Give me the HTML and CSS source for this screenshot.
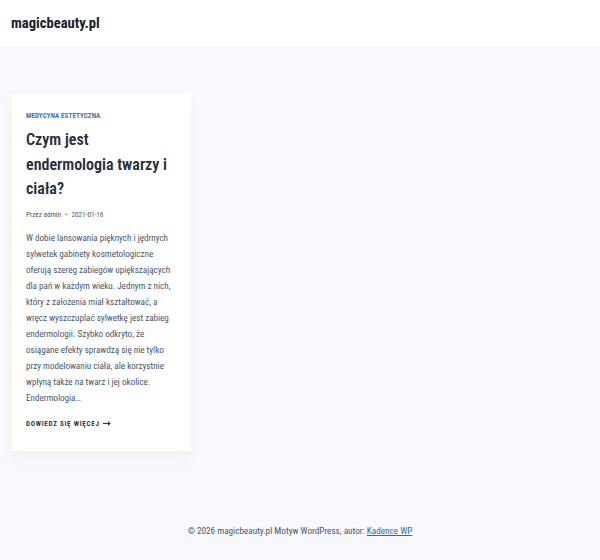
FILE: index.html
```html
<!DOCTYPE html>
<html lang="pl">
<head>
<meta charset="utf-8">
<title>magicbeauty.pl</title>
<link rel="stylesheet" href="styles.css">
</head>
<body>
<header class="site-header">
  <a class="logo" href="#">magicbeauty.pl</a>
</header>
<main class="content">
  <article class="card">
    <div class="category">MEDYCYNA ESTETYCZNA</div>
    <h2 class="title">Czym jest endermologia twarzy i ciała?</h2>
    <div class="meta"><span>Przez admin</span><span class="dot">•</span><span>2021-01-16</span></div>
    <p class="excerpt">W dobie lansowania pięknych i jędrnych sylwetek gabinety kosmetologiczne oferują szereg zabiegów upiększających dla pań w każdym wieku. Jednym z nich, który z założenia miał kształtować, a wręcz wyszczuplać sylwetkę jest zabieg endermologii. Szybko odkryto, że osiągane efekty sprawdzą się nie tylko przy modelowaniu ciała, ale korzystnie wpłyną także na twarz i jej okolice. Endermologia…</p>
    <a class="more" href="#">DOWIEDZ SIĘ WIĘCEJ<svg class="arrow" width="8" height="5" viewBox="0 0 8 5" aria-hidden="true"><path d="M0 2.5H6.5" stroke="currentColor" stroke-width="1.1"/><path d="M5 0.3L7.8 2.5L5 4.7Z" fill="currentColor"/></svg></a>
  </article>
</main>
<footer class="site-footer">
  © 2026 magicbeauty.pl Motyw WordPress, autor: <a href="#">Kadence WP</a>
</footer>
</body>
</html>
```
FILE: styles.css
```css
* { box-sizing: border-box; }
html, body { margin: 0; padding: 0; }
body {
  background: #f7f9fc;
  font-family: Roboto, "Liberation Sans", Arial, sans-serif;
  font-stretch: condensed;
  color: #2d3748;
  width: 600px;
  height: 560px;
  display: flex;
  flex-direction: column;
}
.site-header {
  background: #fff;
  height: 46px;
  display: flex;
  align-items: center;
  padding: 0 11px;
}
.logo {
  font-weight: bold;
  font-size: 14.6px;
  color: #1a202c;
  text-decoration: none;
}
.content {
  padding: 48px 10px 0 12px;
  flex: 1;
}
.card {
  width: 179px;
  background: #fff;
  padding: 18px 14px 23px 14px;
  box-shadow: 0 6px 14px rgba(0,0,0,0.04);
}
.category {
  font-size: 7px;
  font-weight: bold;
  color: #3b76b5;
  letter-spacing: 0.1px;
}
.title {
  margin: 8px 0 0;
  font-size: 16px;
  line-height: 24.5px;
  font-weight: 600;
  color: #262e3b;
}
.meta {
  margin-top: 8px;
  font-size: 7.2px;
  color: #4a5568;
  display: flex;
  gap: 4px;
}
.excerpt {
  margin: 11px 0 0;
  font-size: 9.1px;
  line-height: 16px;
  color: #4a5568;
}
.more {
  display: flex;
  align-items: center;
  gap: 3px;
  margin-top: 14px;
  font-size: 7px;
  font-weight: bold;
  color: #2d3748;
  text-decoration: none;
  letter-spacing: 0.75px;
}
.site-footer {
  text-align: center;
  font-size: 9.2px;
  color: #4a5568;
  padding-bottom: 24px;
}
.site-footer a { color: #2b6cb0; }
```
